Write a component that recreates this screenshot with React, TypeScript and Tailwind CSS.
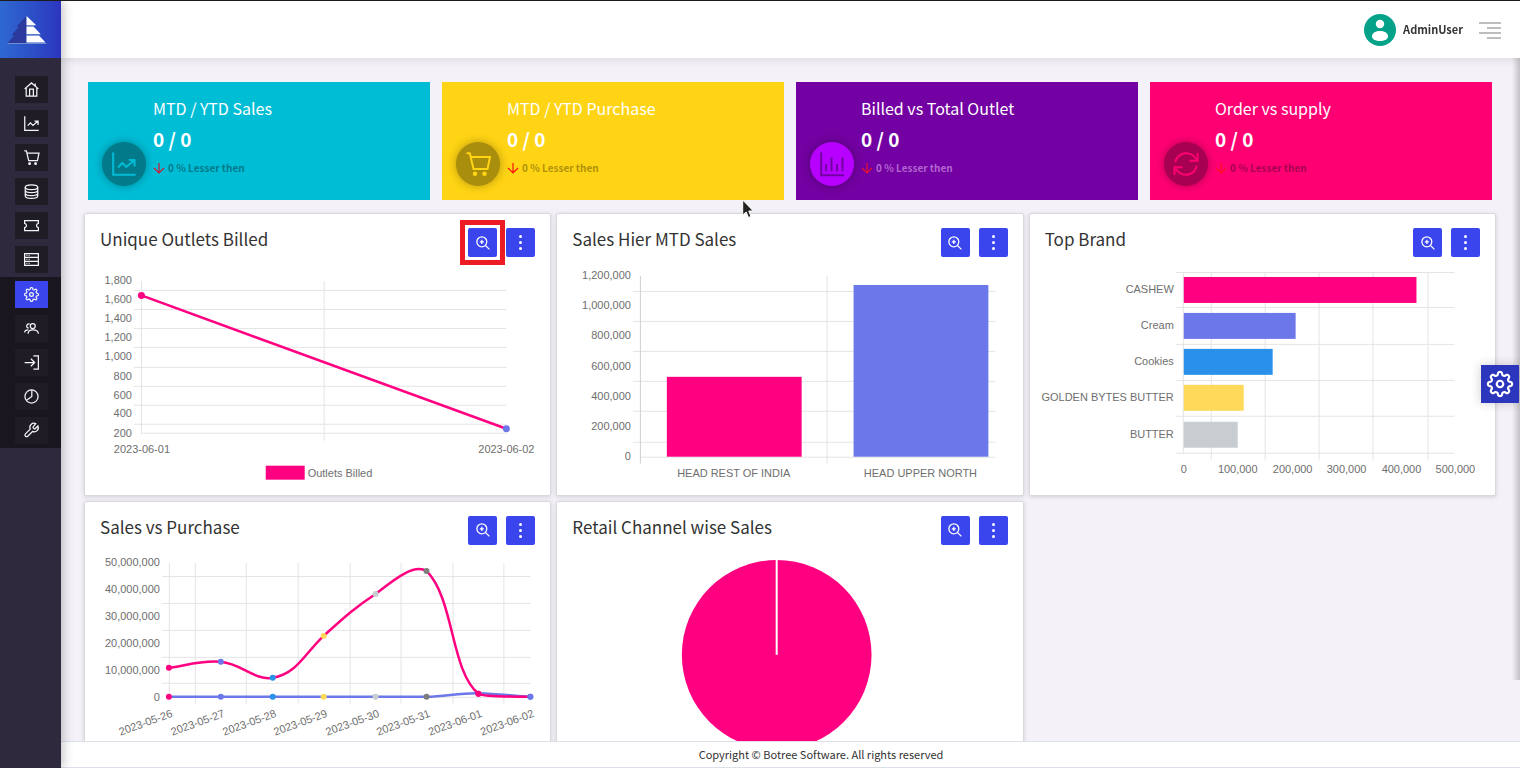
import React from 'react';

const SANS = "font-['Noto_Sans_CJK_SC','Noto_Sans',sans-serif]";
const CHART_FONT = "font-['Liberation_Sans',Arial,sans-serif]";

const GRID = '#e4e4e4';
const PINK = '#ff0080';
const INDIGO = '#6c77ea';
const BLUE = '#2a91ea';
const YELLOW = '#ffd95a';
const SILVER = '#c8cdd1';
const GRAY = '#7d7d7d';

// eight rounded teeth around the hub
const gearPath = Array.from({ length: 121 }, (_, i) => {
  const a = (i / 120) * Math.PI * 2;
  const r = 9.7 + 1.6 * Math.tanh(1.5 * Math.cos(8 * a));
  const x = 12 + r * Math.sin(a);
  const y = 12 - r * Math.cos(a);
  return `${i === 0 ? 'M' : 'L'}${x.toFixed(2)} ${y.toFixed(2)}`;
}).join('') + 'Z';

const icons = {
  home: <path d="M1 11 12 1.500 23 11M18 6.500V2.500M3.500 9v13.500h17V9M9 22V11.500h6V22" />,
  graph: <path d="M1.200 .5v22.300h22.300M6 15.500l4.300-4.500 4 4L22.500 8M16.800 8h5.700v6.500" />,
  cart: (
    <>
      <path d="M.5 1.200h3.300L7.500 17h14L24 5H4.800" />
      <circle cx="9" cy="21.800" r="1.300" fill="currentColor" />
      <circle cx="18.500" cy="21.800" r="1.300" fill="currentColor" />
    </>
  ),
  database: (
    <>
      <ellipse cx="12" cy="5" rx="10" ry="3.800" />
      <path d="M2 5v14c0 2.200 4.500 3.800 10 3.800s10-1.600 10-3.800V5M2 10c0 2.200 4.500 3.800 10 3.800S22 12.200 22 10M2 14.600c0 2.200 4.500 3.800 10 3.800s10-1.600 10-3.800" />
    </>
  ),
  ticket: <path d="M1 4h22v4.500c-2 .5-3 1.800-3 3.500s1 3 3 3.500V20H1v-4.500c2-.5 3-1.800 3-3.500s-1-3-3-3.500z" />,
  server: (
    <>
      <path d="M1 2.500h22v6H1zM1 8.500h22v6.500H1zM1 15h22v6.500H1z" />
      <path d="M4 5.500h1.500M7.500 5.500H9M4 11.800h1.500M7.500 11.800H9M4 18.200h1.500M7.500 18.200H9" />
    </>
  ),
  gear: (
    <>
      <path d={gearPath} />
      <circle cx="12" cy="12" r="3" />
    </>
  ),
  users: (
    <>
      <circle cx="14" cy="8" r="4" />
      <path d="M6.500 20.500c0-4.500 3-6.500 7.500-6.500s9 2 9 6.500M9 5a3.300 3.300 0 1 0-1.500 6.300M1 18.500c0-3 2-4.500 6-4.500" />
    </>
  ),
  login: <path d="M1 12h16M11 6l6 6-6 6M15 1.500h8v21h-8" />,
  pie: (
    <>
      <circle cx="12" cy="12" r="10.500" />
      <path d="M12.500 1.500V12L4 18" />
    </>
  ),
  wrench: (
    <path d="M14.700 6.300a1 1 0 0 0 0 1.400l1.600 1.600a1 1 0 0 0 1.400 0l4.600-4.600a6.600 6.600 0 0 1-8.700 8.800l-7.600 7.600a2.600 2.600 0 0 1-3.700-3.700l7.600-7.600a6.600 6.600 0 0 1 8.800-8.700z" />
  ),
  bars: <path d="M1.200 .5v22.800h23M6 12v7.300M11.500 5.500v13.800M17 12v7.300M22.500 5.500v13.800" />,
  refresh: <path d="M1.300 10.500A11 10.500 0 0 1 22.500 8M23.500 1v7.700h-8M22.700 13.500A11 10.500 0 0 1 1.500 16M.5 23V15.300h8" />,
  down: <path d="M12 2v20M2 12l10 10 10-10" />,
  zoom: <path d="M10 1.500a8.500 8.500 0 1 1 0 17 8.500 8.500 0 0 1 0-17zM16.500 16.500 23 23M10 6.500v7M6.500 10h7" />,
};

type IconName = keyof typeof icons;

const Icon = ({ name, className = '', stroke = 2 }: { name: IconName; className?: string; stroke?: number }) => (
  <svg viewBox="0 0 24 24" fill="none" stroke="currentColor" strokeWidth={stroke} className={`overflow-visible ${className}`} aria-hidden="true">
    {icons[name]}
  </svg>
);

const mainMenu: { icon: IconName; label: string }[] = [
  { icon: 'home', label: 'Home' },
  { icon: 'graph', label: 'Sales' },
  { icon: 'cart', label: 'Purchase' },
  { icon: 'database', label: 'Stock' },
  { icon: 'ticket', label: 'Claims' },
  { icon: 'server', label: 'Masters' },
];

const settingsMenu: { icon: IconName; label: string }[] = [
  { icon: 'gear', label: 'Settings' },
  { icon: 'users', label: 'Users' },
  { icon: 'login', label: 'Login' },
  { icon: 'pie', label: 'Reports' },
  { icon: 'wrench', label: 'Tools' },
];

const MenuItem = ({ icon, label, active = false }: { icon: IconName; label: string; active?: boolean }) => (
  <li className="h-[34px] pt-[3px] pr-[13px] flex justify-end">
    <a
      href="#"
      aria-label={label}
      className={`w-[33px] h-[27px] flex items-center justify-center text-gray-100 ${active ? 'bg-[#3b45ee]' : 'bg-[#1f1c26]'}`}
    >
      <Icon name={icon} className="w-[15px] h-[15px]" />
    </a>
  </li>
);

const Sidebar = () => (
  <aside className="relative z-20 w-[61px] shrink-0 bg-[#2e293c] shadow-[2px_0_10px_rgba(0,0,0,0.25)]">
    <a href="#" aria-label="Dashboard" className="h-[57px] pl-[7px] flex items-center bg-linear-to-r from-[#2f68d0] to-[#2c35bf]">
      <svg viewBox="0 0 40 30" className="w-10 h-[30px]" aria-hidden="true">
        <path d="M19.500 1v27H.5L7 21l-2-1.500 6.500-7L10 11z" fill="#2b3a9c" />
        <path d="M19.500 1 29 10h-9.500zM19.500 11.500h7l7 7.500h-14zM19.500 20.500h12.500l6.500 7h-19z" fill="#fff" />
        <path d="M19.500 10.500h9M19.500 19.800h14M.5 28.500h39" stroke="#6f8fd0" />
      </svg>
    </a>
    <nav className="pt-[15px]">
      <ul>
        {mainMenu.map((m) => <MenuItem key={m.icon} {...m} />)}
      </ul>
      <ul className="bg-[#191620] pt-px">
        {settingsMenu.map((m) => <MenuItem key={m.icon} {...m} active={m.icon === 'gear'} />)}
      </ul>
    </nav>
  </aside>
);

const Header = () => (
  <header className="relative z-10 h-[57px] shrink-0 bg-white flex items-center justify-end gap-4 pr-[19px] shadow-[0_0_10px_rgba(0,0,0,0.15)]">
    <button className="flex items-center gap-[7px]">
      <svg viewBox="0 0 32 32" className="w-8 h-8" aria-hidden="true">
        <circle cx="16" cy="16" r="16" fill="#05a28a" />
        <circle cx="16" cy="10" r="4.200" fill="#fff" />
        <path d="M8 22.500c0-4 4-5.500 8-5.500s8 1.500 8 5.500c0 3-4 4.500-8 4.500s-8-1.500-8-4.500z" fill="#fff" />
      </svg>
      <span className="text-[11px] font-bold text-[#333]">AdminUser</span>
    </button>
    <button aria-label="Menu">
      <svg viewBox="0 0 22 18" className="w-[22px] h-[18px]" stroke="#bdbdbd" strokeWidth="2" aria-hidden="true">
        <path d="M0 2h22M8 7h14M0 12h22M8 17h14" />
      </svg>
    </button>
  </header>
);

const stats: { title: string; icon: IconName; card: string; circle: string; note: string; arrow: string }[] = [
  { title: 'MTD / YTD Sales', icon: 'graph', card: 'bg-[#00bdd6]', circle: 'bg-[#027a8a] text-[#00bdd6]', note: 'text-[#027a8a]', arrow: 'text-[#d01530]' },
  { title: 'MTD / YTD Purchase', icon: 'cart', card: 'bg-[#ffd414]', circle: 'bg-[#a98d0c] text-[#ffd414]', note: 'text-[#b0920a]', arrow: 'text-[#ff1010]' },
  { title: 'Billed vs Total Outlet', icon: 'bars', card: 'bg-[#7300a2]', circle: 'bg-[#b700ff] text-[#7300a2]', note: 'text-[#b266d0]', arrow: 'text-[#e8102a]' },
  { title: 'Order vs supply', icon: 'refresh', card: 'bg-[#ff0073]', circle: 'bg-[#a80050] text-[#ff0073]', note: 'text-[#a80050]', arrow: 'text-[#ff1020]' },
];

const StatCard = ({ title, icon, card, circle, note, arrow }: (typeof stats)[number]) => (
  <div className={`flex gap-[7px] pl-[14px] pt-[14px] h-[118px] ${card}`}>
    <div className={`self-end mb-[14px] size-11 shrink-0 rounded-full flex items-center justify-center shadow-[0_0_10px_rgba(0,0,0,0.3)] ${circle}`}>
      <Icon name={icon} className="size-6" />
    </div>
    <div className="text-white whitespace-nowrap">
      <h3 className="text-[16px] leading-6">{title}</h3>
      <p className="mt-[3px] text-[19px] leading-8 font-bold">0 / 0</p>
      <p className={`mt-[5px] text-[10px] leading-4 font-bold flex items-center gap-[3px] ${note}`}>
        <Icon name="down" className={`size-3 ${arrow}`} stroke={2.4} />
        0 % Lesser then
      </p>
    </div>
  </div>
);

const WidgetCard = ({ title, marked = false, children }: { title: string; marked?: boolean; children: React.ReactNode }) => (
  <section className="bg-white border border-[#d9d8dd] rounded-xs shadow-[0_1px_4px_rgba(0,0,0,0.15)]">
    <div className="pt-[14px] pl-[15px] pr-[15px] flex justify-between">
      <h2 className="text-[17px] leading-[22px] text-[#333]">{title}</h2>
      <div className="flex gap-[9px]">
        <div className="relative">
          <button aria-label={`Zoom ${title}`} className="size-[29px] rounded-xs bg-[#3b45ee] text-white flex items-center justify-center">
            <Icon name="zoom" className="size-[14px]" stroke={2.2} />
          </button>
          {marked && <span className="absolute -inset-2 border-5 border-[#ed1c24] pointer-events-none" />}
        </div>
        <button aria-label={`${title} options`} className="size-[29px] rounded-xs bg-[#3b45ee] flex flex-col items-center justify-center gap-[3px]">
          <span className="size-[3px] rounded-full bg-white" />
          <span className="size-[3px] rounded-full bg-white" />
          <span className="size-[3px] rounded-full bg-white" />
        </button>
      </div>
    </div>
    <svg viewBox="0 0 466 232" role="img" aria-label={title} className={`block w-full mt-[6px] text-[11px] ${CHART_FONT}`}>
      {children}
    </svg>
  </section>
);

type LabelProps = { x: number; y: number; anchor?: 'start' | 'middle' | 'end'; rotate?: number; children: React.ReactNode };

const Label = ({ x, y, anchor = 'middle', rotate, children }: LabelProps) => (
  <text x={x} y={y + 4} textAnchor={anchor} fill="#6e6e6e" transform={rotate ? `rotate(${rotate} ${x} ${y})` : undefined}>
    {children}
  </text>
);

const HLines = ({ ys, x1, x2 }: { ys: number[]; x1: number; x2: number }) => (
  <>{ys.map((y) => <rect key={y} x={x1} y={y} width={x2 - x1} height="1" fill={GRID} />)}</>
);

const VLines = ({ xs, y1, y2 }: { xs: number[]; y1: number; y2: number }) => (
  <>{xs.map((x) => <rect key={x} x={x} y={y1} width="1" height={y2 - y1} fill={GRID} />)}</>
);

const YAxis = ({ x, ticks }: { x: number; ticks: [string, number][] }) => (
  <>{ticks.map(([label, y]) => <Label key={label} x={x} y={y} anchor="end">{label}</Label>)}</>
);

const OutletsChart = () => (
  <>
    <YAxis x={47} ticks={[['1,800', 17], ['1,600', 36], ['1,400', 55], ['1,200', 74], ['1,000', 93], ['800', 113], ['600', 132], ['400', 150], ['200', 170]]} />
    <HLines ys={[27, 46, 65, 84, 104, 123, 142, 161]} x1={49} x2={422} />
    <HLines ys={[170]} x1={56} x2={422} />
    <VLines xs={[56]} y1={18} y2={171} />
    <VLines xs={[239]} y1={18} y2={178} />
    <path d="M56.500 32.500 422 166" stroke={PINK} strokeWidth="2.500" />
    <circle cx="56.500" cy="32.500" r="3.500" fill={PINK} />
    <circle cx="422" cy="166" r="3.500" fill={INDIGO} />
    <Label x={57} y={186}>2023-06-01</Label>
    <Label x={422} y={186}>2023-06-02</Label>
    <rect x="181" y="203" width="39" height="14" fill={PINK} />
    <Label x={223} y={210} anchor="start">Outlets Billed</Label>
  </>
);

const HierChart = () => (
  <>
    <YAxis x={74} ticks={[['1,200,000', 12], ['1,000,000', 42], ['800,000', 72], ['600,000', 103], ['400,000', 133], ['200,000', 163], ['0', 193]]} />
    <HLines ys={[28, 58, 88, 118, 148, 179]} x1={76} x2={439} />
    <HLines ys={[194]} x1={83} x2={439} />
    <VLines xs={[270]} y1={13} y2={201} />
    <rect x="83" y="13" width="1" height="188" fill="#cfcfcf" />
    <rect x="110" y="114" width="135" height="80" fill={PINK} />
    <rect x="297" y="22" width="135" height="172" fill={INDIGO} />
    <Label x={177} y={210}>HEAD REST OF INDIA</Label>
    <Label x={364} y={210}>HEAD UPPER NORTH</Label>
  </>
);

const brands = [
  { name: 'CASHEW', y: 14, width: 233, color: PINK },
  { name: 'Cream', y: 50, width: 112, color: INDIGO },
  { name: 'Cookies', y: 86, width: 89, color: BLUE },
  { name: 'GOLDEN BYTES BUTTER', y: 122, width: 60, color: YELLOW },
  { name: 'BUTTER', y: 159, width: 54, color: SILVER },
];

const BrandChart = () => (
  <>
    <HLines ys={[9, 44, 81, 117, 153, 190]} x1={146} x2={425} />
    <VLines xs={[153]} y1={9} y2={190} />
    <VLines xs={[181, 235, 289, 343, 398]} y1={9} y2={197} />
    {brands.map((b) => (
      <React.Fragment key={b.name}>
        <rect x="154" y={b.y} width={b.width} height="26" fill={b.color} />
        <Label x={144} y={b.y + 12} anchor="end">{b.name}</Label>
      </React.Fragment>
    ))}
    {['0', '100,000', '200,000', '300,000', '400,000', '500,000'].map((t, i) => (
      <Label key={t} x={154 + Math.round(i * 54.4)} y={206}>{t}</Label>
    ))}
  </>
);

const days = [
  { date: '2023-05-26', x: 84, sales: 117, purchase: 146, color: PINK },
  { date: '2023-05-27', x: 136, sales: 111, purchase: 146, color: INDIGO },
  { date: '2023-05-28', x: 188, sales: 127, purchase: 146, color: BLUE },
  { date: '2023-05-29', x: 239, sales: 85, purchase: 146, color: YELLOW },
  { date: '2023-05-30', x: 291, sales: 43, purchase: 146, color: SILVER },
  { date: '2023-05-31', x: 342, sales: 20, purchase: 146, color: GRAY },
  { date: '2023-06-01', x: 394, sales: 143, purchase: 143, color: PINK },
  { date: '2023-06-02', x: 446, sales: 146, purchase: 146, color: INDIGO },
];

const SalesChart = () => (
  <>
    <YAxis x={75} ticks={[['50,000,000', 11], ['40,000,000', 38], ['30,000,000', 65], ['20,000,000', 92], ['10,000,000', 119], ['0', 146]]} />
    <HLines ys={[25, 52, 79, 106, 132]} x1={77} x2={446} />
    <HLines ys={[146]} x1={84} x2={446} />
    <VLines xs={[84]} y1={12} y2={146} />
    <VLines xs={[110, 161, 213, 265, 316, 368, 419]} y1={12} y2={153} />
    <path d="M84 146H342C360 146 375 142 394 142.500S430 145 446 146" fill="none" stroke={INDIGO} strokeWidth="2.500" />
    <path
      d="M84 117C100 115 117 109 136 111C157 113 170 130 188 127C212 123 219 104 239 85C258 68 271 56 291 43C308 30 329 12 342 20C370 48 366 120 394 143C400 146 430 146 446 146"
      fill="none"
      stroke={PINK}
      strokeWidth="2.500"
    />
    {days.map((d) => (
      <React.Fragment key={d.date}>
        <circle cx={d.x} cy={d.sales} r="3" fill={d.color} />
        <circle cx={d.x} cy={d.purchase} r="3" fill={d.color} />
        <Label x={d.x + 3} y={162} anchor="end" rotate={-20}>{d.date}</Label>
      </React.Fragment>
    ))}
  </>
);

const ChannelChart = () => (
  <>
    <circle cx="220" cy="104" r="95" fill={PINK} />
    <path d="M220 8v96" stroke="#fff" strokeWidth="2" />
  </>
);

const App: React.FC = () => (
  <div className={`h-screen flex border-t border-[#1b1b1b] overflow-hidden bg-[#f4f2f8] ${SANS}`}>
    <Sidebar />
    <div className="flex-1 min-w-0 flex flex-col">
      <Header />
      <main className="flex-1 min-h-0 overflow-y-auto [scrollbar-width:none] pt-6">
        <div className="grid grid-cols-4 gap-3 pl-[27px] pr-7">
          {stats.map((s) => <StatCard key={s.title} {...s} />)}
        </div>
        <div className="grid grid-cols-3 gap-[5px] pt-[13px] pl-[23px] pr-6">
          <WidgetCard title="Unique Outlets Billed" marked><OutletsChart /></WidgetCard>
          <WidgetCard title="Sales Hier MTD Sales"><HierChart /></WidgetCard>
          <WidgetCard title="Top Brand"><BrandChart /></WidgetCard>
          <WidgetCard title="Sales vs Purchase"><SalesChart /></WidgetCard>
          <WidgetCard title="Retail Channel wise Sales"><ChannelChart /></WidgetCard>
        </div>
      </main>
      <footer className="relative z-10 h-[27px] shrink-0 pl-[61px] bg-white border-y border-[#dbe0ea] text-[11px] text-[#333] flex items-center justify-center">
        Copyright © Botree Software. All rights reserved
      </footer>
    </div>

    {/* edge shadow of the closed settings drawer */}
    <div className="fixed top-[58px] right-0 z-0 w-2 h-[622px] bg-linear-to-l from-black/20 to-transparent pointer-events-none" />
    <button aria-label="Theme settings" className="fixed z-30 right-px top-1/2 -translate-y-1/2 size-[38px] bg-[#2c36bd] text-white flex items-center justify-center shadow-[0_0_10px_rgba(0,0,0,0.2)]">
      <Icon name="gear" className="size-[26px]" />
    </button>

    {/* mouse pointer */}
    <svg viewBox="0 0 12 20" className="fixed z-40 left-[742px] top-[199px] w-3 h-5 pointer-events-none" aria-hidden="true">
      <path d="M.7 1v15l3.500-3 2.300 5.500 2.500-1L6.800 12H11.300z" fill="#222" stroke="#fff" />
    </svg>
  </div>
);

export default App;
